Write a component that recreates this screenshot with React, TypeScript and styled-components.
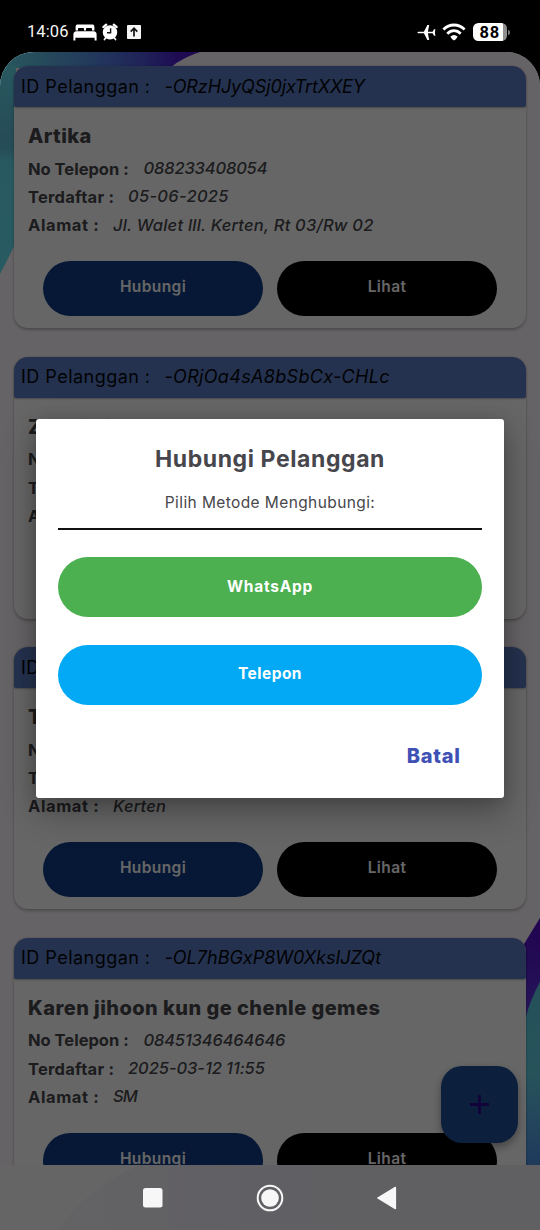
import React from 'react';
import styled, { createGlobalStyle } from 'styled-components';

const GlobalStyle = createGlobalStyle`
  *, *::before, *::after { box-sizing: border-box; }
  body { margin: 0; background: #000; font-family: Inter, "Open Sans", sans-serif; }
`;

/* ---------- Shell ---------- */

const Phone = styled.div`
  width: 540px;
  height: 1230px;
  display: flex;
  flex-direction: column;
  overflow: hidden;
  background: #000;
`;

const Screen = styled.main`
  position: relative;
  flex: 1;
  min-height: 0;
  display: flex;
  flex-direction: column;
  overflow: hidden;
  isolation: isolate;
  clip-path: inset(0 round 34px 34px 0 0);
`;

const Wallpaper = styled.svg`
  position: absolute;
  inset: 0;
  width: 100%;
  height: 100%;
`;

/* ---------- Status bar ---------- */

const StatusBar = styled.header`
  height: 52px;
  display: flex;
  align-items: center;
  justify-content: space-between;
  padding: 12px 33px 0 27px;
  color: #f4f4f4;
`;

const StatusGroup = styled.div`
  display: flex;
  align-items: center;
`;

const Clock = styled.span`
  font: 400 16.5px/20px Roboto, sans-serif;
  letter-spacing: 0.1px;
  width: 45.5px;
`;

const StatusIcon = styled.svg<{ $gap?: number }>`
  display: block;
  flex: none;
  margin-left: ${(p) => p.$gap ?? 0}px;
`;

const Battery = styled.div`
  position: relative;
  margin-left: 7px;
  width: 34px;
  height: 18px;
  border-radius: 5.5px;
  background: linear-gradient(90deg, #fff 30.5px, #8f8f8f 30.5px);
  color: #000;
  font: 700 16.5px/19px Roboto, sans-serif;
  letter-spacing: 0.9px;
  padding-left: 6.5px;

  &::after {
    content: '';
    position: absolute;
    right: -2.5px;
    top: 6.5px;
    width: 1.8px;
    height: 5px;
    border-radius: 0 2px 2px 0;
    background: #777;
  }
`;

/* ---------- Customer list ---------- */

const List = styled.section`
  position: relative;
  flex: 1;
  min-height: 0;
  overflow: hidden;
  display: flex;
  flex-direction: column;
  gap: 28.5px;
  padding: 14px 14px 0;
`;

const Card = styled.article`
  flex: none;
  height: 262px;
  border-radius: 14px;
  background: #fff;
  box-shadow: 0 1.5px 3px rgba(0, 0, 0, 0.24), 0 0 2px rgba(0, 0, 0, 0.1);
`;

const CardHeader = styled.div`
  height: 41.4px;
  display: flex;
  align-items: center;
  padding-left: 7px;
  border-radius: 14px 14px 2px 2px;
  background: #5c7dc5;
  box-shadow: 0 1px 2px rgba(0, 0, 0, 0.28);
  color: #040509;
  font-size: 18px;
  line-height: 24px;
  white-space: nowrap;
`;

const HeaderLabel = styled.span`
  width: 143.5px;
  letter-spacing: 0.47px;
`;

const HeaderId = styled.span<{ $track: number }>`
  font-style: italic;
  letter-spacing: ${(p) => p.$track}px;
`;

const CardBody = styled.div`
  padding: 14.8px 14px 0;
  color: #47474c;
`;

const CustomerName = styled.h2`
  margin: 0 0 4px;
  font-size: 20px;
  font-weight: 800;
  line-height: 28.5px;
  letter-spacing: 0.44px;
  white-space: nowrap;
`;

const Field = styled.div`
  display: flex;
  height: 28.4px;
  font-size: 16.5px;
  line-height: 28.4px;
  white-space: nowrap;
`;

const FieldLabel = styled.span<{ $width: number; $track: number }>`
  width: ${(p) => p.$width}px;
  font-weight: 700;
  letter-spacing: ${(p) => p.$track}px;
`;

const FieldValue = styled.span<{ $track: number }>`
  margin-top: -0.6px;
  font-style: italic;
  font-weight: 500;
  letter-spacing: ${(p) => p.$track}px;
`;

const Actions = styled.div`
  display: flex;
  gap: 14px;
  padding: 21.2px 15px 0;
`;

const ActionButton = styled.button<{ $bg: string }>`
  flex: 1;
  height: 55px;
  padding: 0 0 4px;
  border: 0;
  border-radius: 28px;
  background: ${(p) => p.$bg};
  color: #fff;
  font: 600 15.5px Inter, sans-serif;
  letter-spacing: 0.4px;
`;

/* ---------- Floating button and navigation ---------- */

const Fab = styled.button`
  position: absolute;
  right: 22px;
  bottom: 87px;
  width: 77px;
  height: 77px;
  display: grid;
  place-items: center;
  padding: 0;
  border: 0;
  border-radius: 21px;
  background: #1e5099;
  box-shadow: 0 4px 8px rgba(0, 0, 0, 0.35);
`;

const NavBar = styled.nav`
  position: absolute;
  left: 0;
  right: 0;
  bottom: 0;
  height: 65px;
  display: flex;
  align-items: center;
  justify-content: center;
  gap: 89px;
  padding: 0 1px 0 0;
`;

const NavSpace = styled.div`
  flex: none;
  height: 65px;
`;

const Scrim = styled.div`
  position: absolute;
  inset: 0;
  display: flex;
  justify-content: center;
  align-items: flex-start;
  padding-top: 367px;
  background: rgba(0, 0, 0, 0.6);
`;

/* ---------- Dialog ---------- */

const Dialog = styled.div`
  width: 468px;
  height: 379px;
  display: flex;
  flex-direction: column;
  padding: 24.5px 22px 0;
  border-radius: 3px;
  background: #fff;
  box-shadow: 0 14px 34px rgba(0, 0, 0, 0.3), 0 2px 16px rgba(0, 0, 0, 0.15);
  text-align: center;
`;

const DialogTitle = styled.h1`
  margin: 0;
  color: #46464c;
  font-size: 23px;
  font-weight: 700;
  line-height: 30px;
  letter-spacing: 0.6px;
`;

const DialogText = styled.p`
  margin: 0;
  padding: 19.5px 0 15px;
  border-bottom: 2px solid #111;
  color: #47474c;
  font-size: 15.5px;
  line-height: 20px;
  letter-spacing: 0.4px;
`;

const MethodButton = styled.button<{ $bg: string; $track: number }>`
  flex: none;
  height: 60px;
  margin-top: 27.4px;
  padding: 0 0 2px;
  border: 0;
  border-radius: 30px;
  background: ${(p) => p.$bg};
  color: #fff;
  font: 700 15.5px Inter, sans-serif;
  letter-spacing: ${(p) => p.$track}px;
`;

const CancelButton = styled.button`
  align-self: flex-end;
  margin: 38.7px 21.5px 0 0;
  padding: 0;
  border: 0;
  background: none;
  color: #3f51b5;
  font: 800 20px/26px Inter, sans-serif;
  letter-spacing: 0.69px;
`;

type Tracked = [text: string, track: number];

interface Customer {
  id: Tracked;
  name: string;
  phone: Tracked;
  registered: Tracked;
  address: Tracked;
}

const customers: Customer[] = [
  {
    id: ['-ORzHJyQSj0jxTrtXXEY', -0.11],
    name: 'Artika',
    phone: ['088233408054', -0.16],
    registered: ['05-06-2025', 0.3],
    address: ['Jl. Walet lll. Kerten, Rt 03/Rw 02', 0.23],
  },
  {
    id: ['-ORjOa4sA8bSbCx-CHLc', 0.32],
    name: 'Zaenimi',
    phone: ['', 0],
    registered: ['', 0],
    address: ['', 0],
  },
  {
    id: ['', 0],
    name: 'T',
    phone: ['', 0],
    registered: ['', 0],
    address: ['Kerten', 0.22],
  },
  {
    id: ['-OL7hBGxP8W0XksIJZQt', 0.01],
    name: 'Karen jihoon kun ge chenle gemes',
    phone: ['08451346464646', -0.16],
    registered: ['2025-03-12 11:55', -0.07],
    address: ['SM', -0.8],
  },
];

function CustomerCard({ customer }: { customer: Customer }) {
  return (
    <Card>
      <CardHeader>
        <HeaderLabel>ID Pelanggan :</HeaderLabel>
        <HeaderId $track={customer.id[1]}>{customer.id[0]}</HeaderId>
      </CardHeader>
      <CardBody>
        <CustomerName>{customer.name}</CustomerName>
        <Field>
          <FieldLabel $width={115.5} $track={0}>No Telepon :</FieldLabel>
          <FieldValue $track={customer.phone[1]}>{customer.phone[0]}</FieldValue>
        </Field>
        <Field>
          <FieldLabel $width={100} $track={0.24}>Terdaftar :</FieldLabel>
          <FieldValue $track={customer.registered[1]}>{customer.registered[0]}</FieldValue>
        </Field>
        <Field>
          <FieldLabel $width={85} $track={0.6}>Alamat :</FieldLabel>
          <FieldValue $track={customer.address[1]}>{customer.address[0]}</FieldValue>
        </Field>
        <Actions>
          <ActionButton $bg="#0f3c85">Hubungi</ActionButton>
          <ActionButton $bg="#000">Lihat</ActionButton>
        </Actions>
      </CardBody>
    </Card>
  );
}

function Background() {
  return (
    <Wallpaper viewBox="0 0 540 1178" preserveAspectRatio="none">
      <defs>
        <linearGradient id="topWave" gradientUnits="userSpaceOnUse" x1="0" y1="30" x2="200" y2="0">
          <stop offset="0" stopColor="#66dcee" />
          <stop offset="0.22" stopColor="#5fbce4" />
          <stop offset="0.5" stopColor="#5588e6" />
          <stop offset="0.72" stopColor="#4f55dc" />
          <stop offset="0.88" stopColor="#4f20d0" />
          <stop offset="1" stopColor="#5210cc" />
        </linearGradient>
        <linearGradient id="leftWave" x1="0" y1="0" x2="0" y2="1">
          <stop offset="0" stopColor="#66dcee" />
          <stop offset="0.32" stopColor="#5fbfda" />
          <stop offset="0.4" stopColor="#5cc0dc" />
          <stop offset="0.46" stopColor="#66def0" />
          <stop offset="1" stopColor="#64e2f6" />
        </linearGradient>
        <linearGradient id="rightWave" x1="0" y1="0" x2="0" y2="1">
          <stop offset="0" stopColor="#5cc8e0" />
          <stop offset="0.5" stopColor="#62cfe4" />
          <stop offset="1" stopColor="#5090e6" />
        </linearGradient>
        <linearGradient id="purple" x1="0" y1="0" x2="0" y2="1">
          <stop offset="0" stopColor="#5208c8" />
          <stop offset="1" stopColor="#603ce0" />
        </linearGradient>
        <linearGradient id="bottom" x1="0" y1="0" x2="1" y2="0">
          <stop offset="0" stopColor="#fbfafc" />
          <stop offset="0.45" stopColor="#f1eef8" />
          <stop offset="1" stopColor="#f0f1f7" />
        </linearGradient>
      </defs>
      <rect width="540" height="1178" fill="#fdf7fc" />
      <path d="M0 0H200C188 4 178 9 170 16H0Z" fill="url(#topWave)" />
      <path d="M0 14H16V190Q8 207 0 222Z" fill="url(#leftWave)" />
      <path d="M540 866L524 892V975L540 930Z" fill="url(#purple)" />
      <path d="M540 930Q530 948 525 968V1114H540Z" fill="url(#rightWave)" />
      <rect y="1113" width="540" height="65" fill="url(#bottom)" />
      <path d="M0 1113H142Q92 1130 58 1178H0Z" fill="#fcfcfc" />
    </Wallpaper>
  );
}

function StatusIcons() {
  return (
    <>
      <StatusIcon width="24" height="17" viewBox="0 0 24 17">
        <path fill="#fff" d="M2.6 6.6V2.4Q2.6 .6 4.4 .6H19.6Q21.4 .6 21.4 2.4V6.6H19V4.8Q19 4 18.2 4H13.8Q13 4 13 4.8V6.6H11V4.8Q11 4 10.2 4H5.8Q5 4 5 4.8V6.6Z" />
        <path fill="#fff" d="M3.4 7.2H20.6Q23.6 7.4 23.6 10.4V16.4H21.6V13.8H2.4V16.4H.4V10.4Q.4 7.4 3.4 7.2Z" />
      </StatusIcon>
      <StatusIcon $gap={5.5} width="16" height="18" viewBox="0 0 16 18">
        <circle cx="8" cy="9.4" r="7.2" fill="#fff" />
        <path d="M1.3 4.1L4.2 1.6M14.7 4.1L11.8 1.6" stroke="#fff" strokeWidth="2.2" strokeLinecap="round" />
        <path d="M3.6 15L2.4 16.6M12.4 15L13.6 16.6" stroke="#fff" strokeWidth="1.6" strokeLinecap="round" />
        <path d="M8.6 5.2V9.8H5" stroke="#111" strokeWidth="1.4" fill="none" />
      </StatusIcon>
      <StatusIcon $gap={8.5} width="14" height="14" viewBox="0 0 14 14">
        <rect width="14" height="14" rx="0.8" fill="#f4f4f4" />
        <path d="M7 11.4V3.6M3.7 6.6L7 3.2L10.3 6.6" stroke="#111" strokeWidth="1.7" fill="none" />
      </StatusIcon>
    </>
  );
}

export default function App() {
  return (
    <>
      <GlobalStyle />
      <Phone>
        <StatusBar>
          <StatusGroup>
            <Clock>14:06</Clock>
            <StatusIcons />
          </StatusGroup>
          <StatusGroup>
            <StatusIcon width="19" height="17" viewBox="0 0 19 17">
              <path
                fill="#fff"
                d="M1.4 7.7H6.9L10.4 1H12.2L10.9 7.7H15.6L17 5.2H18.4L17.9 8.5L18.4 11.8H17L15.6 9.3H10.9L12.2 16H10.4L6.9 9.3H1.4Q.5 9.2 .5 8.5Q.5 7.8 1.4 7.7Z"
              />
            </StatusIcon>
            <StatusIcon $gap={6.5} width="24" height="18" viewBox="0 0 24 18">
              <g fill="none" stroke="#fff" strokeWidth="2.8">
                <path d="M1.4 6.4Q6 2 12 2T22.6 6.4" />
                <path d="M5.3 10.7Q8.3 7.7 12 7.7T18.7 10.7" />
              </g>
              <path fill="#fff" d="M8.4 13.6Q12 10.6 15.6 13.6Q14.8 16 12 17.4Q9.2 16 8.4 13.6Z" />
            </StatusIcon>
            <Battery>88</Battery>
          </StatusGroup>
        </StatusBar>

        <Screen>
          <Background />
          <List>
            {customers.map((customer) => (
              <CustomerCard key={customer.name} customer={customer} />
            ))}
          </List>
          <NavSpace />
          <Fab aria-label="Tambah">
            <svg width="21" height="21" viewBox="0 0 21 21">
              <path d="M10.5 1V20M1 10.5H20" stroke="#2f0791" strokeWidth="2.8" />
            </svg>
          </Fab>

          <Scrim>
            <Dialog role="dialog">
              <DialogTitle>Hubungi Pelanggan</DialogTitle>
              <DialogText>Pilih Metode Menghubungi:</DialogText>
              <MethodButton $bg="#4caf50" $track={0.77}>WhatsApp</MethodButton>
              <MethodButton $bg="#03a9f4" $track={0.46}>Telepon</MethodButton>
              <CancelButton>Batal</CancelButton>
            </Dialog>
          </Scrim>

          <NavBar>
            <svg width="28" height="28" viewBox="0 0 28 28">
              <rect x="4" y="4" width="19.5" height="19.5" rx="2.5" fill="#f7f7f7" />
            </svg>
            <svg width="28" height="28" viewBox="0 0 28 28">
              <circle cx="14" cy="14" r="12.3" fill="none" stroke="#f7f7f7" strokeWidth="2" />
              <circle cx="14" cy="14" r="8.8" fill="#f7f7f7" />
            </svg>
            <svg width="28" height="28" viewBox="0 0 28 28">
              <path d="M4.8 14L22.4 3.4V24.6Z" fill="#f7f7f7" stroke="#f7f7f7" strokeWidth="1.4" strokeLinejoin="round" />
            </svg>
          </NavBar>
        </Screen>
      </Phone>
    </>
  );
}
